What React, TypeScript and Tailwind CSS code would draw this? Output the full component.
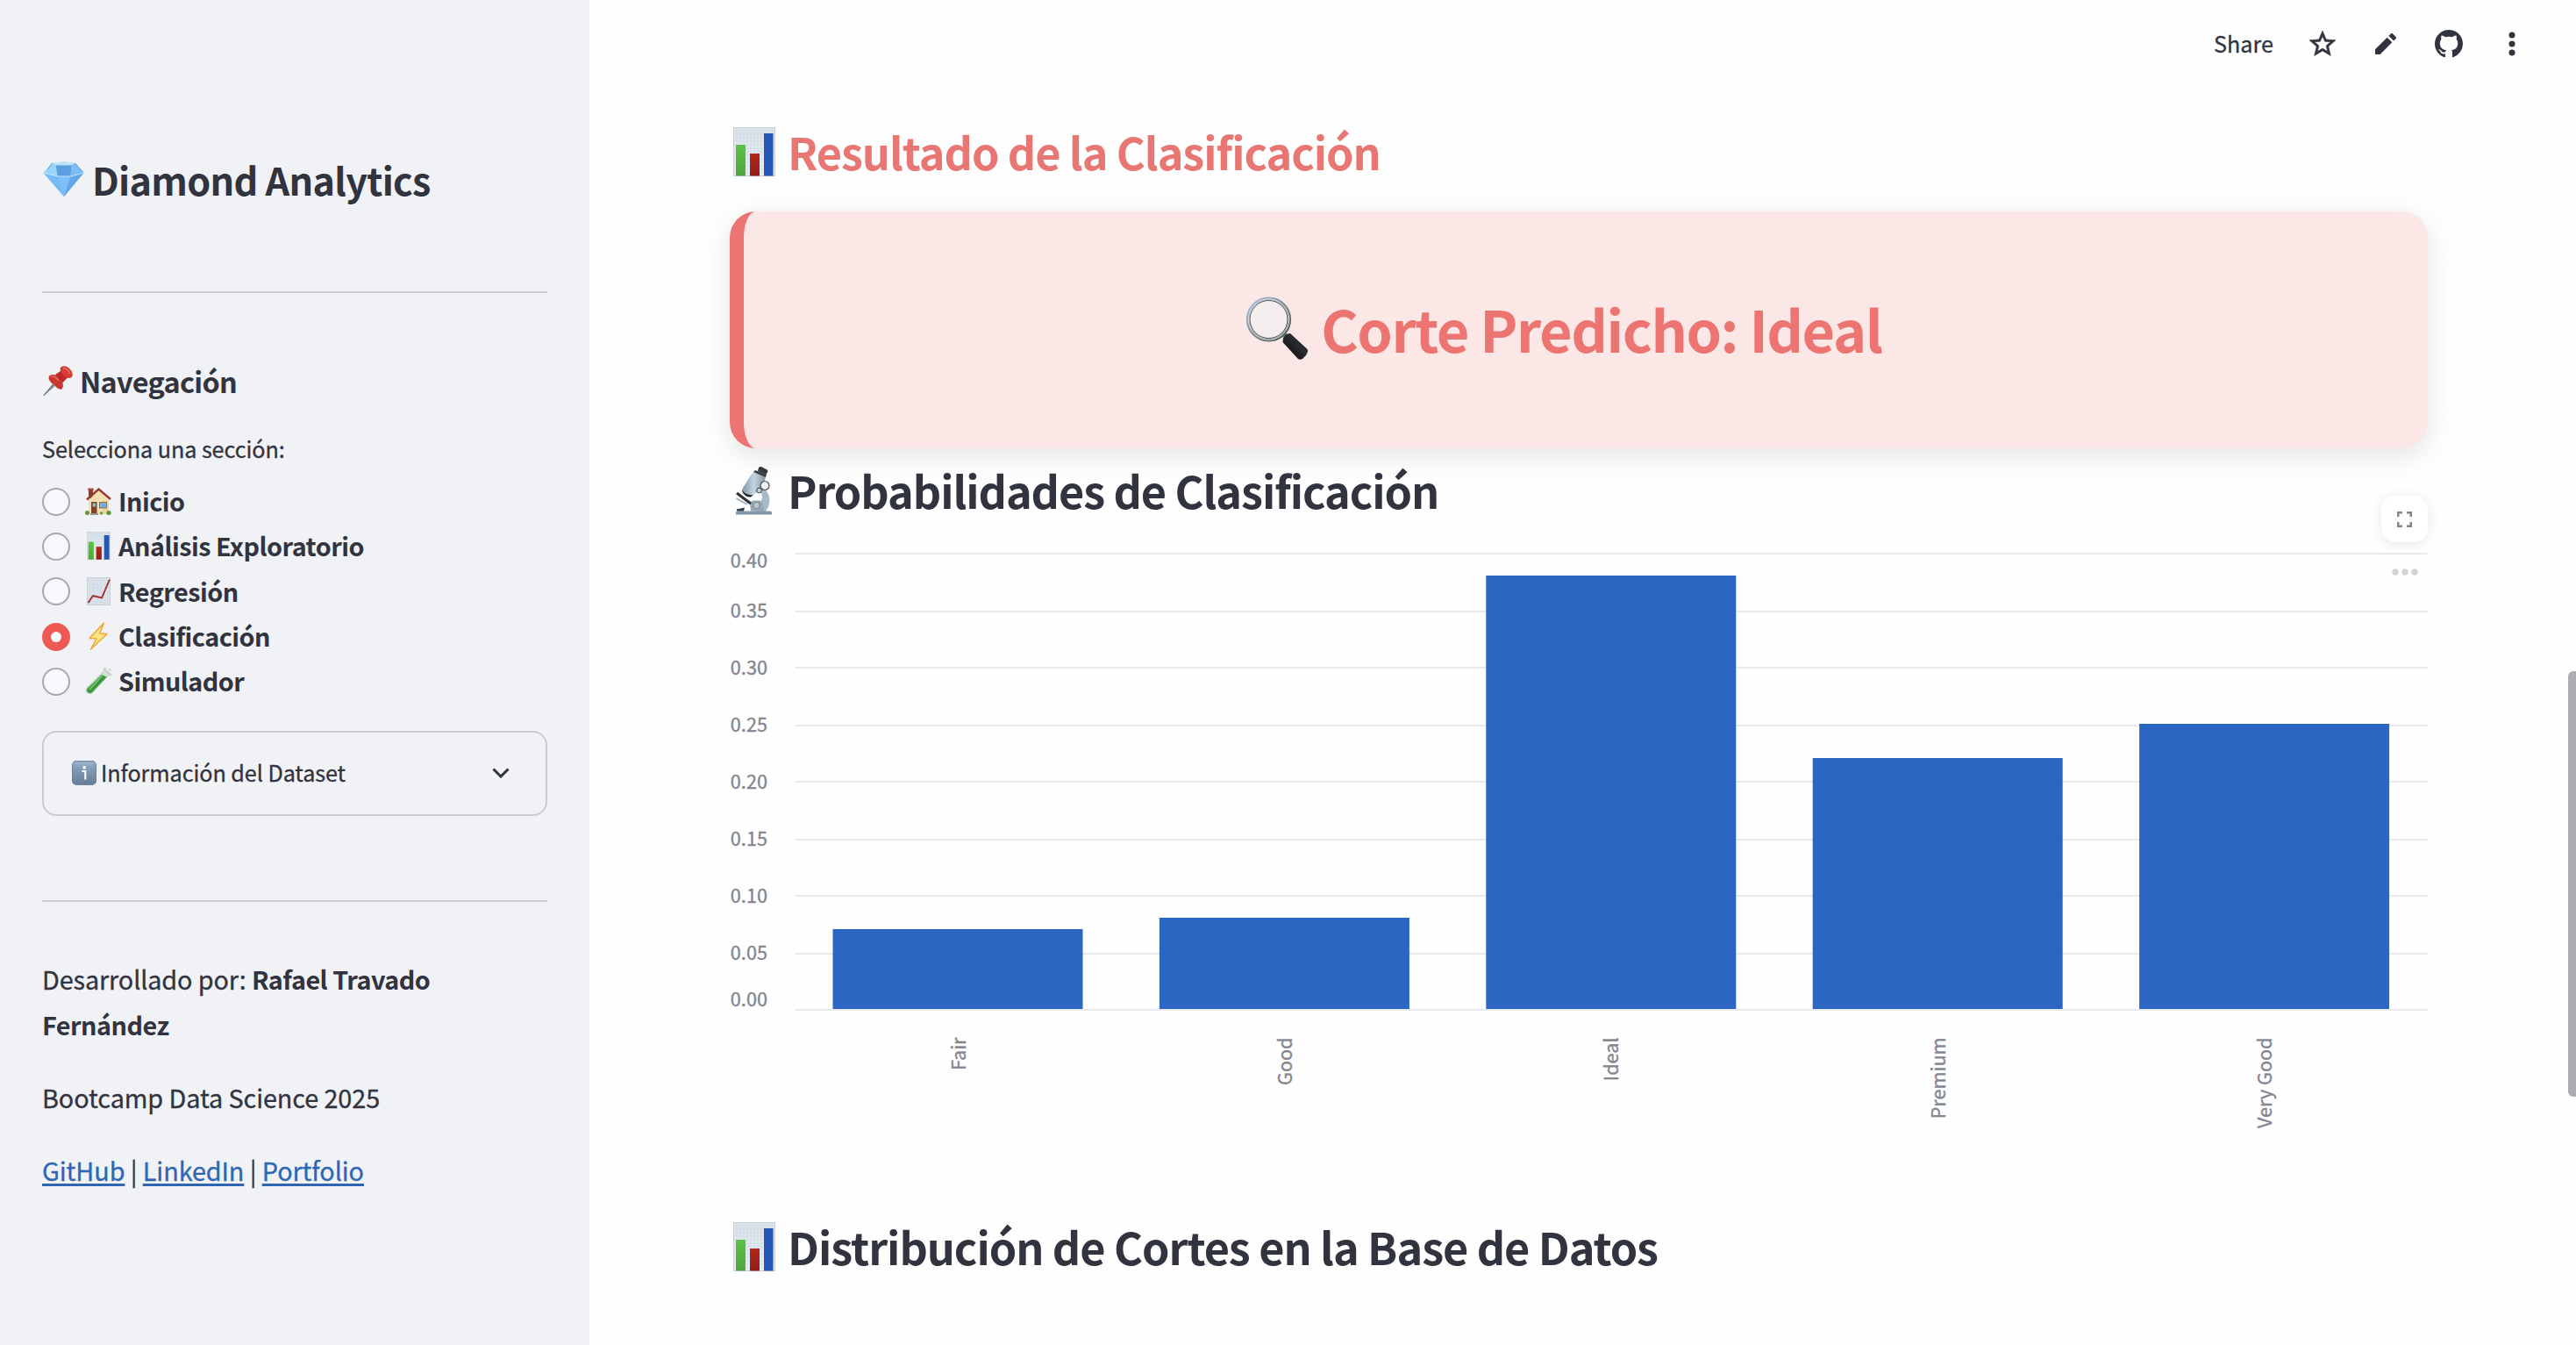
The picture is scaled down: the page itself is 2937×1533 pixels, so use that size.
import type { ReactNode } from "react";

type IconProps = { className?: string };

function Diamond({ className }: IconProps) {
  return (
    <svg viewBox="0 0 46 40" className={className}>
      <defs>
        <linearGradient id="gem" x1="0" y1="0" x2="1" y2="1">
          <stop offset="0" stopColor="#a5d8fb" />
          <stop offset="1" stopColor="#5fa9ea" />
        </linearGradient>
      </defs>
      <path d="M10 2Q23 -1 36 2L46 13L23.500 40L0 13Z" fill="url(#gem)" />
      <path d="M10 2Q23 -1 36 2L32 4.500H14Z" fill="#bfe4f8" />
      <path d="M14 4.500H32L31 17H16Z" fill="#5c9fe0" />
      <path d="M10 2L14 4.500L16 17L0 13Z" fill="#9bd4fa" />
      <path d="M36 2L32 4.500L31 17L46 13Z" fill="#7dbdf4" />
      <path d="M0 13L16 17L23.500 40Z" fill="#74bbf5" />
      <path d="M16 17H31L23.500 40Z" fill="#7cc0f6" />
      <path d="M31 17L46 13L23.500 40Z" fill="#62a8e8" />
      <path d="M0 13L16 17H31L46 13" fill="none" stroke="#c9ebff" strokeWidth="0.9" />
      <path d="M10 2L5 9M36 2L45 12" stroke="#4f8fc9" strokeWidth="0.8" />
    </svg>
  );
}

function Pin({ className }: IconProps) {
  return (
    <svg viewBox="0 0 34 34" className={className}>
      <path d="M1 33.500L11 20.500L14 23Z" fill="#8d99a5" />
      <path d="M1 33.500L12 21.500" stroke="#6b7783" strokeWidth="1.300" />
      <path d="M7 11.500C10 9 15 9.500 18.500 13C22.500 17 24.500 23 21.500 26.500C18.500 27.500 15.500 25 12.500 21.500C8.500 19 5.500 15 7 11.500Z" fill="#c9352f" />
      <path d="M14 10L22 4.500L29.500 12L22.500 19Z" fill="#bb2a28" />
      <path d="M20 2C22.500 -1 28 0 31 4C34.500 8 34.500 12 32 13.500C29 15 24 12 22 9C20 6.500 19 4 20 2Z" fill="#d63d34" />
      <path d="M9 12C12 11 16 14 18 17" stroke="#e9695f" strokeWidth="1.600" fill="none" />
      <path d="M23 2.500C26 2.500 29.500 5.500 31 9" stroke="#ee756a" strokeWidth="1.300" fill="none" />
    </svg>
  );
}

function House({ className }: IconProps) {
  return (
    <svg viewBox="0 0 30 31" className={className}>
      <path d="M4 3H9V12H4Z" fill="#8e3b2b" />
      <rect x="3.300" y="0.500" width="6.400" height="2.500" fill="#a84b37" />
      <path d="M4 14L15.500 3L27 14V30H4Z" fill="#f3dfaf" />
      <path d="M20 14H27V30H20Z" fill="#ecd29b" />
      <path d="M2 13.500L15.500 1.500L29 13" fill="none" stroke="#983a2b" strokeWidth="2.400" />
      <rect x="7" y="16" width="6.500" height="13.500" fill="#7c4328" />
      <rect x="8.500" y="17.500" width="3.500" height="4" fill="#8cb9da" />
      <rect x="16" y="16" width="9" height="7.500" fill="#a7693f" />
      <rect x="17" y="17" width="7" height="5.500" fill="#73b0e2" />
      <path d="M6 29H15V31H6Z" fill="#9c9690" />
      <circle cx="2.500" cy="28.500" r="2.500" fill="#5f9638" />
      <circle cx="18.500" cy="29" r="1.800" fill="#6b9e3f" />
      <circle cx="27" cy="28.500" r="2.600" fill="#5f9638" />
    </svg>
  );
}

function BarChartEmoji({ className }: IconProps) {
  return (
    <svg viewBox="0 0 48 56" preserveAspectRatio="none" className={className}>
      <defs>
        <linearGradient id="paper" x1="0" y1="0" x2="0" y2="1">
          <stop offset="0" stopColor="#dbe2e9" />
          <stop offset="1" stopColor="#edf3f8" />
        </linearGradient>
        <linearGradient id="green" x1="0" y1="0" x2="0" y2="1">
          <stop offset="0" stopColor="#5cc244" />
          <stop offset="1" stopColor="#52a63c" />
        </linearGradient>
        <linearGradient id="red" x1="0" y1="0" x2="0" y2="1">
          <stop offset="0" stopColor="#b3271c" />
          <stop offset="1" stopColor="#8f1d16" />
        </linearGradient>
      </defs>
      <rect width="48" height="56" fill="url(#paper)" />
      <path d="M4 0V56M8 0V56M12 0V56M16 0V56M20 0V56M24 0V56M28 0V56M32 0V56M36 0V56M40 0V56M44 0V56M0 4H48M0 8H48M0 12H48M0 16H48M0 20H48M0 24H48M0 28H48M0 32H48M0 36H48M0 40H48M0 44H48M0 48H48M0 52H48" stroke="#c9d6e2" strokeWidth="0.6" />
      <rect x="0.500" y="0.500" width="47" height="55" fill="none" stroke="#c9cfd6" />
      <rect x="3" y="20" width="11" height="35.500" fill="url(#green)" />
      <rect x="19" y="30" width="11" height="25.500" fill="url(#red)" />
      <rect x="35" y="7" width="10.500" height="48.500" fill="#2757b6" />
    </svg>
  );
}

function LineChartEmoji({ className }: IconProps) {
  return (
    <svg viewBox="0 0 27 32" preserveAspectRatio="none" className={className}>
      <rect x="0.500" y="0.500" width="26" height="31" fill="#dbe3ec" stroke="#c8cdd4" />
      <path d="M4 0V32M8 0V32M12 0V32M16 0V32M20 0V32M24 0V32M0 4H27M0 8H27M0 12H27M0 16H27M0 20H27M0 24H27M0 28H27" stroke="#cdd7e2" strokeWidth="0.6" />
      <path d="M1.500 29L7 21L17 23.500L26 2.500" fill="none" stroke="#a32a2c" strokeWidth="1.900" />
    </svg>
  );
}

function Bolt({ className }: IconProps) {
  return (
    <svg viewBox="0 0 22 32" className={className}>
      <path d="M17.500 1L1 18.500L9 19L2.500 31L21 13.500L12.500 13Z" fill="#fce681" stroke="#efa53c" strokeWidth="1.500" strokeLinejoin="round" />
    </svg>
  );
}

function TestTube({ className }: IconProps) {
  return (
    <svg viewBox="0 0 31 32" className={className}>
      <path d="M23 3.500L28.500 8L8.500 29.500C5 32.500 -0.500 29 1.500 24.500Z" fill="#d5e4d9" stroke="#aebbb3" strokeWidth="0.8" />
      <path d="M19 9L24.500 11.500L8 29C5 31.500 0.800 28.500 2.500 25Z" fill="#35963b" />
      <path d="M19.500 10.500L5 26" stroke="#7ccb72" strokeWidth="1.600" />
      <path d="M21 2L30 10" stroke="#c3ccc8" strokeWidth="2" />
      <circle cx="23" cy="1.800" r="1.300" fill="#ccd3d0" />
      <circle cx="28" cy="3.500" r="1.700" fill="#d6dcda" />
    </svg>
  );
}

function InfoEmoji({ className }: IconProps) {
  return (
    <svg viewBox="0 0 28 28" className={className}>
      <defs>
        <linearGradient id="info" x1="0" y1="0" x2="0" y2="1">
          <stop offset="0" stopColor="#a3bad2" />
          <stop offset="0.25" stopColor="#859fba" />
          <stop offset="1" stopColor="#657d96" />
        </linearGradient>
      </defs>
      <rect x="0.600" y="0.600" width="26.800" height="26.800" rx="4.500" fill="url(#info)" stroke="#6d859e" strokeWidth="1.200" />
      <circle cx="14.200" cy="7.800" r="1.900" fill="#fff" />
      <path d="M11.500 12H15.300V21.500" fill="none" stroke="#fff" strokeWidth="2" />
    </svg>
  );
}

function Magnifier({ className }: IconProps) {
  return (
    <svg viewBox="0 0 71 72" className={className}>
      <defs>
        <linearGradient id="rim" x1="0" y1="0" x2="1" y2="1">
          <stop offset="0" stopColor="#a9c0ea" />
          <stop offset="0.5" stopColor="#7f868a" />
          <stop offset="1" stopColor="#44494c" />
        </linearGradient>
        <linearGradient id="grip" x1="0" y1="1" x2="1" y2="0">
          <stop offset="0" stopColor="#050505" />
          <stop offset="0.6" stopColor="#2a2d30" />
          <stop offset="1" stopColor="#0c0d0e" />
        </linearGradient>
      </defs>
      <path d="M40 43L46 41.500L49 46L44 51Z" fill="#7d8285" />
      <path d="M42 48Q44 42 50 42L69 59.500Q71.500 62 68 67L64.500 70.500Q61 73 58.500 70.500L41.500 52Z" fill="url(#grip)" />
      <circle cx="25.500" cy="26" r="23.900" fill="#f4eeee" stroke="url(#rim)" strokeWidth="3.400" />
      <circle cx="25.500" cy="26" r="23.300" fill="none" stroke="#dfe3e6" strokeWidth="1" />
      <circle cx="25.500" cy="26" r="21.500" fill="none" stroke="#54595d" strokeWidth="1" />
    </svg>
  );
}

function Microscope({ className }: IconProps) {
  return (
    <svg viewBox="0 0 42 55" className={className}>
      <defs>
        <linearGradient id="steel" x1="0" y1="0" x2="1" y2="0">
          <stop offset="0" stopColor="#7f93a3" />
          <stop offset="0.5" stopColor="#c3d4e0" />
          <stop offset="1" stopColor="#8497a6" />
        </linearGradient>
      </defs>
      <path d="M32 24C41 30 42 43 34 52H23L24 42C31 41 33 34 29 29Z" fill="#a9bac7" />
      <path d="M1 52Q1 50.500 4 50.500H39Q42 50.500 42 52V54.500H1Z" fill="#8497a6" />
      <path d="M17 42Q18 38.500 22 38.500H28Q32 40 33 50.500H18Z" fill="#95a7b5" />
      <circle cx="24.500" cy="44" r="3.700" fill="#b7c5cf" stroke="#76899a" strokeWidth="1" />
      <path d="M2 30L18 42" stroke="#2d3237" strokeWidth="3.200" />
      <path d="M1.500 36L14 43" stroke="#9db0be" strokeWidth="1.800" />
      <path d="M2 48.500L11 46.500L10 50.500H2Z" fill="#33393e" />
      <path d="M17 11L21 6L35 11L32 24L21 32Q12 33 8 26Z" fill="url(#steel)" />
      <path d="M8 26Q12 33 21 32L18 34.500Q12 35 8.500 29Z" fill="#202428" />
      <path d="M21 6L23 4L36 8.500L35 12Z" fill="#3b4248" />
      <path d="M27 1Q28 -0.500 30 0L36 3Q38 4.500 37 6.500L35 8.500L26 5Z" fill="#343a40" />
      <circle cx="34" cy="21.500" r="5" fill="#eef1f3" stroke="#434a50" strokeWidth="1.200" />
      <circle cx="27.500" cy="27" r="2.800" fill="#c7d2da" stroke="#333a40" strokeWidth="1" />
    </svg>
  );
}

type Section = { label: string; icon: ReactNode; active?: boolean };

const sections: Section[] = [
  { label: "Inicio", icon: <House className="h-[31px] w-[30px]" /> },
  { label: "Análisis Exploratorio", icon: <BarChartEmoji className="h-8 w-[27px]" /> },
  { label: "Regresión", icon: <LineChartEmoji className="h-8 w-[27px]" /> },
  { label: "Clasificación", icon: <Bolt className="h-8 w-[22px]" />, active: true },
  { label: "Simulador", icon: <TestTube className="h-8 w-[31px]" /> },
];

function Sidebar() {
  return (
    <aside className="flex w-[672px] shrink-0 flex-col bg-[#f0f2f6] px-12 pt-[176px]">
      <h1 className="flex h-14 items-center text-[43.2px] leading-[56px] font-bold tracking-[-0.017em]">
        <Diamond className="mr-[9px] ml-px h-10 w-[47px]" />
        Diamond Analytics
      </h1>
      <hr className="mt-[100px] h-0.5 border-0 bg-[#cacccf]" />
      <h3 className="mt-[78px] flex h-11 items-center text-[32.4px] leading-[44px] font-bold tracking-[-0.021em]">
        <Pin className="mr-[8px] ml-px size-[34px]" />
        Navegación
      </h3>
      <p className="mt-[35px] text-[25.2px] leading-10 tracking-[-0.003em] [-webkit-text-stroke:0.3px]">Selecciona una sección:</p>
      <ul className="mt-[15px]">
        {sections.map((s) => (
          <li key={s.label} className="flex h-[51.3px] items-center">
            {s.active ? (
              <span className="flex size-8 items-center justify-center rounded-full bg-[#ee5a53]">
                <span className="size-3 rounded-full bg-[#fafafd]" />
              </span>
            ) : (
              <span className="size-8 rounded-full border-2 border-[#a7a8ae] bg-[#f9f9fc]" />
            )}
            <span className="ml-4 flex w-8 justify-center pb-px">{s.icon}</span>
            <span className="ml-[7px] pb-px text-[28.8px] leading-10 font-bold tracking-[-0.018em]">{s.label}</span>
          </li>
        ))}
      </ul>
      <div className="mt-[31px] flex h-[97px] items-center rounded-2xl border-2 border-[#cacccf] pr-[41px] pb-[2px] pl-8 text-[25.2px]">
        <InfoEmoji className="mr-[5px] size-7" />
        <span className="flex-1 tracking-[-0.003em] [-webkit-text-stroke:0.3px]">Información del Dataset</span>
        <svg viewBox="0 0 20 12" className="h-3 w-5">
          <path d="M1.500 1.500L10 10L18.500 1.500" fill="none" stroke="#31333f" strokeWidth="3" />
        </svg>
      </div>
      <hr className="mt-24 h-0.5 border-0 bg-[#cacccf]" />
      <p className="mt-[62px] text-[28.8px] leading-[51.200px] tracking-[-0.004em] [-webkit-text-stroke:0.3px]">
        Desarrollado por:{" "}
        <strong className="tracking-[-0.018em] [-webkit-text-stroke:0px]">
          Rafael Travado <br />
          Fernández
        </strong>
      </p>
      <p className="mt-8 text-[28.8px] leading-[51.200px] tracking-[-0.003em] [-webkit-text-stroke:0.3px]">Bootcamp Data Science 2025</p>
      <p className="mt-8 text-[28.8px] leading-[51.200px] tracking-[-0.003em] [-webkit-text-stroke:0.3px]">
        <a className="text-[#2f66b3] underline decoration-[3px] underline-offset-[3px] [text-decoration-skip-ink:none]">GitHub</a> |{" "}
        <a className="text-[#2f66b3] underline decoration-[3px] underline-offset-[3px] [text-decoration-skip-ink:none]">LinkedIn</a> |{" "}
        <a className="text-[#2f66b3] underline decoration-[3px] underline-offset-[3px] [text-decoration-skip-ink:none]">Portfolio</a>
      </p>
    </aside>
  );
}

function Toolbar() {
  return (
    <header className="flex h-[100px] items-center justify-end pr-[63px]">
      <span className="text-[25.2px] [-webkit-text-stroke:0.3px]">Share</span>
      <svg viewBox="0 0 24 24" fill="#31333f" stroke="#31333f" strokeWidth="0.4" strokeLinejoin="round" className="ml-[38px] size-9">
        <path d="M22 9.240l-7.190-.62L12 2 9.190 8.630 2 9.240l5.460 4.730L5.820 21 12 17.270 18.180 21l-1.630-7.030L22 9.240zM12 15.400l-3.760 2.270 1-4.280-3.320-2.880 4.380-.38L12 6.100l1.710 4.040 4.380.38-3.320 2.880 1 4.280L12 15.400z" />
      </svg>
      <svg viewBox="0 0 24 24" fill="#31333f" className="ml-9 size-9">
        <path d="M4 16.200V19.500C4 19.800 4.200 20 4.500 20H7.800L16.900 10.900L13.100 7.100ZM19.700 8.100C20.100 7.700 20.100 7 19.700 6.600L17.400 4.300C17 3.900 16.300 3.900 15.900 4.300L14.300 5.900L18.100 9.700Z" />
      </svg>
      <svg viewBox="0 0 16 16" fill="#31333f" className="ml-[38px] size-8">
        <path d="M8 0C3.580 0 0 3.580 0 8c0 3.540 2.290 6.530 5.470 7.590.4.070.55-.17.55-.38 0-.19-.010-.82-.010-1.490-2.010.37-2.530-.49-2.690-.94-.090-.23-.48-.94-.82-1.130-.28-.15-.68-.52-.010-.53.63-.010 1.080.58 1.230.82.72 1.210 1.870.87 2.330.66.070-.52.28-.87.51-1.070-1.780-.2-3.640-.89-3.640-3.950 0-.87.31-1.590.82-2.150-.080-.2-.36-1.020.080-2.120 0 0 .67-.21 2.200.82.64-.18 1.320-.27 2-.27s1.360.090 2 .27c1.530-1.040 2.200-.82 2.200-.82.44 1.100.16 1.920.080 2.120.51.56.82 1.270.82 2.150 0 3.070-1.870 3.750-3.650 3.950.29.25.54.73.54 1.480 0 1.070-.010 1.930-.010 2.200 0 .21.15.46.55.38A8.010 8.010 0 0 0 16 8c0-4.420-3.580-8-8-8z" />
      </svg>
      <svg viewBox="0 0 20 32" fill="#31333f" className="ml-[46px] h-8 w-5">
        <circle cx="10" cy="6" r="3.500" />
        <circle cx="10" cy="16" r="3.500" />
        <circle cx="10" cy="26" r="3.500" />
      </svg>
    </header>
  );
}

const bars = [
  { label: "Fair", value: 0.07 },
  { label: "Good", value: 0.08 },
  { label: "Ideal", value: 0.38 },
  { label: "Premium", value: 0.22 },
  { label: "Very Good", value: 0.25 },
];

const ticks = [
  { label: "0.40", line: 39, base: 55 },
  { label: "0.35", line: 105, base: 112 },
  { label: "0.30", line: 169, base: 177 },
  { label: "0.25", line: 235, base: 242 },
  { label: "0.20", line: 299, base: 307 },
  { label: "0.15", line: 365, base: 372 },
  { label: "0.10", line: 429, base: 437 },
  { label: "0.05", line: 495, base: 502 },
  { label: "0.00", line: 559, base: 555 },
];

function ProbabilityChart() {
  return (
    <div className="relative h-[794px]">
      <svg viewBox="0 0 1936 794" className="h-[794px] w-[1936px]">
        {ticks.map((t) => (
          <g key={t.label}>
            <line x1="75" x2="1936" y1={t.line} y2={t.line} stroke="#e7e9ed" strokeWidth="2" />
            <text x="0.8" y={t.base} fontSize="21.6" fill="#83858f" stroke="#83858f" strokeWidth="0.35" letterSpacing="0.05">
              {t.label}
            </text>
          </g>
        ))}
        {bars.map((b, i) => {
          const x = 117.500 + i * 372.400;
          return (
            <g key={b.label}>
              <rect x={x} y={558 - b.value * 1300} width="285" height={b.value * 1300} fill="#2b66c2" />
              <text transform={`translate(${x + 151} 590.500) rotate(-90)`} textAnchor="end" fontSize="21.6" fill="#83858f" stroke="#83858f" strokeWidth="0.35">
                {b.label}
              </text>
            </g>
          );
        })}
      </svg>
      <button className="absolute top-[-27px] right-0 flex h-[53px] w-[53px] items-center justify-center rounded-2xl bg-white shadow-[0_2px_16px_rgba(0,0,0,0.09)]">
        <svg viewBox="0 0 17 18" fill="none" stroke="#85868a" strokeWidth="2.500" className="h-[18px] w-[17px]">
          <path d="M1.250 6V1.250H6M11 1.250H15.750V6M15.750 12V16.750H11M6 16.750H1.250V12" />
        </svg>
      </button>
      <svg viewBox="0 0 30 8" fill="#d3d3d4" className="absolute top-[56px] right-[11.5px] h-2 w-[30px]">
        <circle cx="4" cy="4" r="3.700" />
        <circle cx="15" cy="4" r="3.700" />
        <circle cx="26" cy="4" r="3.700" />
      </svg>
    </div>
  );
}

export default function App() {
  return (
    <div className="relative flex h-[1533px] w-[2937px] overflow-hidden bg-[#fefefe] font-['Noto_Sans_CJK_SC','Noto_Sans',sans-serif] text-[#31333f]">
      <Sidebar />
      <main className="min-w-0 flex-1">
        <Toolbar />
        <section className="ml-40 w-[1936px]">
          <h2 className="mt-[39px] flex h-[68px] items-center text-[50.4px] leading-[68px] font-bold tracking-[-0.0207em] text-[#e87672]">
            <BarChartEmoji className="mr-3.5 ml-1 h-14 w-12" />
            Resultado de la Clasificación
          </h2>
          <div className="mt-[34px] flex h-[270px] items-center justify-center rounded-[30px] border-l-16 border-[#ec7572] bg-[#fbe7e6] pr-[49px] pb-[5px] shadow-[0_8px_32px_rgba(0,0,0,0.11)]">
            <Magnifier className="mr-[14px] h-[72px] w-[71px]" />
            <span className="text-[64.8px] leading-[80px] font-bold tracking-[-0.0225em] text-[#ec7572]">Corte Predicho: Ideal</span>
          </div>
          <h2 className="relative mt-[14px] flex h-[68px] items-center text-[50.4px] leading-[68px] font-bold tracking-[-0.021em]">
            <Microscope className="mr-[18px] ml-[6px] h-[55px] w-[42px]" />
            Probabilidades de Clasificación
          </h2>
          <div className="-mt-px">
            <ProbabilityChart />
          </div>
          <h2 className="mt-px flex h-[68px] items-center text-[50.4px] leading-[68px] font-bold tracking-[-0.0205em]">
            <BarChartEmoji className="mr-3.5 ml-1 h-14 w-12" />
            Distribución de Cortes en la Base de Datos
          </h2>
        </section>
      </main>
      <div className="absolute top-[765px] right-0 h-[485px] w-[9px] rounded-l-[6px] bg-[#acacb3]" />
    </div>
  );
}
